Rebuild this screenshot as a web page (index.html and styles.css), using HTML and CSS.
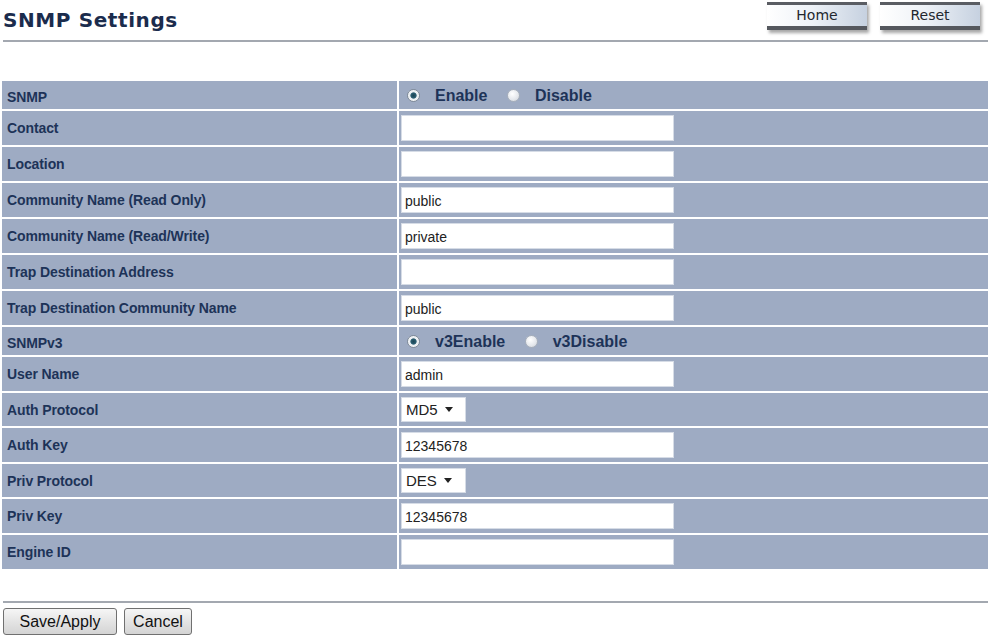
FILE: index.html
```html
<!DOCTYPE html>
<html lang="en">
<head>
    <meta charset="UTF-8">
    <title>SNMP Settings</title>
    <link rel="stylesheet" href="styles.css">
</head>
<body>
    <div class="top-bar">
        <h1 class="page-title">SNMP Settings</h1>
        <div class="top-buttons">
            <a class="img-button" href="#">Home</a>
            <a class="img-button" href="#">Reset</a>
        </div>
    </div>
    <div class="rule"></div>

    <form class="settings-form" onsubmit="return false;">
        <table class="settings">
            <tr class="row-radio">
                <td class="label">SNMP</td>
                <td class="value">
                    <label class="radio"><input type="radio" name="snmp" checked> Enable</label>
                    <label class="radio"><input type="radio" name="snmp"> Disable</label>
                </td>
            </tr>
            <tr class="row-input">
                <td class="label">Contact</td>
                <td class="value"><input type="text" class="text"></td>
            </tr>
            <tr class="row-input">
                <td class="label">Location</td>
                <td class="value"><input type="text" class="text"></td>
            </tr>
            <tr class="row-input">
                <td class="label">Community Name (Read Only)</td>
                <td class="value"><input type="text" class="text" value="public"></td>
            </tr>
            <tr class="row-input">
                <td class="label">Community Name (Read/Write)</td>
                <td class="value"><input type="text" class="text" value="private"></td>
            </tr>
            <tr class="row-input">
                <td class="label">Trap Destination Address</td>
                <td class="value"><input type="text" class="text"></td>
            </tr>
            <tr class="row-input">
                <td class="label">Trap Destination Community Name</td>
                <td class="value"><input type="text" class="text" value="public"></td>
            </tr>
            <tr class="row-radio">
                <td class="label">SNMPv3</td>
                <td class="value">
                    <label class="radio"><input type="radio" name="v3" checked> v3Enable</label>
                    <label class="radio"><input type="radio" name="v3"> v3Disable</label>
                </td>
            </tr>
            <tr class="row-input">
                <td class="label">User Name</td>
                <td class="value"><input type="text" class="text" value="admin"></td>
            </tr>
            <tr class="row-select">
                <td class="label">Auth Protocol</td>
                <td class="value">
                    <div class="select">MD5 <span class="caret"></span></div>
                </td>
            </tr>
            <tr class="row-input">
                <td class="label">Auth Key</td>
                <td class="value"><input type="text" class="text" value="12345678"></td>
            </tr>
            <tr class="row-select">
                <td class="label">Priv Protocol</td>
                <td class="value">
                    <div class="select">DES <span class="caret"></span></div>
                </td>
            </tr>
            <tr class="row-input">
                <td class="label">Priv Key</td>
                <td class="value"><input type="text" class="text" value="12345678"></td>
            </tr>
            <tr class="row-input">
                <td class="label">Engine ID</td>
                <td class="value"><input type="text" class="text"></td>
            </tr>
        </table>

        <div class="rule rule-bottom"></div>

        <div class="form-buttons">
            <button type="button" class="btn btn-save">Save/Apply</button>
            <button type="button" class="btn btn-cancel">Cancel</button>
        </div>
    </form>
</body>
</html>
```

FILE: styles.css
```css
body {
    margin: 0;
    padding: 0;
    background-color: #ffffff;
    font-family: "Liberation Sans", Arial, sans-serif;
    color: #1d3358;
}
.top-bar {
    display: flex;
    justify-content: space-between;
    align-items: flex-start;
    height: 40px;
    padding: 0 10px 0 3px;
}
.page-title {
    margin: 8px 0 0 0;
    font-family: "DejaVu Sans", Verdana, sans-serif;
    font-size: 20px;
    font-weight: bold;
    color: #1b2c4d;
    letter-spacing: 0.6px;
}
.top-buttons {
    display: flex;
    gap: 13px;
    padding-top: 2px;
}
.img-button {
    display: block;
    width: 100px;
    height: 21px;
    line-height: 20px;
    border-top: 3px solid #5a5d63;
    border-bottom: 4px solid #55585e;
    background: linear-gradient(to right, #ffffff 0%, #eef2f7 45%, #c6d1e0 100%);
    box-shadow: 2px 3px 3px rgba(0, 0, 0, 0.35);
    text-align: center;
    text-decoration: none;
    font-family: "DejaVu Sans", sans-serif;
    font-size: 14px;
    color: #23272e;
}
.rule {
    height: 2px;
    margin: 0 2px 0 3px;
    background-color: #a3a8b0;
}
.settings-form {
    margin: 0;
}
.settings {
    width: 100%;
    border-collapse: separate;
    border-spacing: 2px;
    margin-top: 37px;
}
.settings td {
    background-color: #9eabc3;
    padding: 0;
}
.settings .label {
    width: 390px;
    padding-left: 5px;
    font-size: 14px;
    font-weight: bold;
    letter-spacing: -0.1px;
    color: #1d3358;
}
.settings .value {
    padding-left: 2px;
}
.settings .row-radio td {
    height: 25px;
    padding-top: 3px;
}
.row-input td {
    height: 34px;
}
.row-select td {
    height: 33px;
}
.radio {
    display: inline-flex;
    align-items: center;
    margin-left: 6px;
    margin-right: 9px;
    font-size: 16px;
    font-weight: bold;
    color: #1d3358;
}
.radio input {
    appearance: none;
    box-sizing: border-box;
    width: 13px;
    height: 13px;
    margin: 0 15px 0 0;
    border: 1px solid #a8b0bc;
    border-radius: 50%;
    background: radial-gradient(circle at 40% 35%, #ffffff 0%, #e4e7ec 60%, #c9cdd4 100%);
}
.radio input:checked {
    border-color: #7f8a98;
    background: radial-gradient(circle, #1c4454 0%, #2b5f72 35%, #e8ecf0 45%, #ffffff 100%);
}
.text {
    display: block;
    box-sizing: border-box;
    width: 273px;
    height: 26px;
    margin: 0;
    padding: 2px 3px 0 3px;
    border: 1px solid #d6dce6;
    background: #ffffff;
    font-family: "Liberation Sans", Arial, sans-serif;
    font-size: 14px;
    color: #222222;
}
.select {
    display: inline-flex;
    align-items: center;
    box-sizing: border-box;
    width: 65px;
    height: 25px;
    padding-left: 4px;
    background: #ffffff;
    border: 1px solid #d6dce6;
    font-size: 15px;
    color: #222222;
}
.caret {
    display: inline-block;
    margin-left: 7px;
    width: 0;
    height: 0;
    border-left: 4px solid transparent;
    border-right: 4px solid transparent;
    border-top: 5px solid #222222;
}
.rule-bottom {
    margin-top: 30px;
}
.form-buttons {
    display: flex;
    gap: 7px;
    padding: 5px 0 0 3px;
}
.btn {
    height: 27px;
    padding: 0;
    border: 1px solid #707070;
    border-radius: 3px;
    background: linear-gradient(to bottom, #f6f6f6 0%, #e4e4e4 50%, #d4d4d4 100%);
    font-family: "Liberation Sans", Arial, sans-serif;
    font-size: 16px;
    color: #111111;
}
.btn-save {
    width: 114px;
}
.btn-cancel {
    width: 68px;
}
```
